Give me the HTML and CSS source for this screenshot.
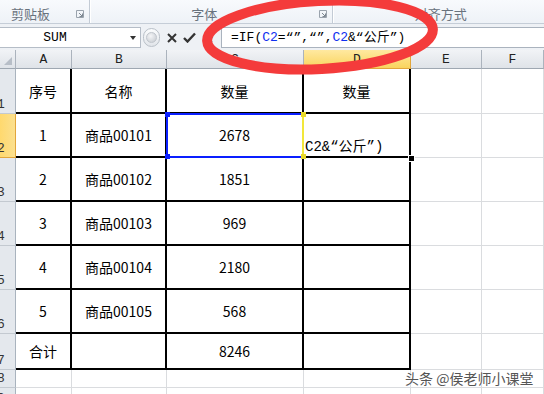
FILE: index.html
```html
<!DOCTYPE html>
<html lang="zh-CN">
<head>
  <meta charset="UTF-8">
  <title>公式示例</title>
  <link rel="stylesheet" href="styles.css">
</head>
<body>
  <div class="ribbon">
    <div class="grp g1"><span>剪贴板</span><svg class="launch" width="8" height="8" viewBox="0 0 8 8"><path d="M0.5 7.5V0.5H7.5V7.5Z" fill="none" stroke="#9aa3ad"/><path d="M3 3L6.5 6.5M6.5 3.5V6.5H3.5" fill="none" stroke="#7d8791"/></svg></div>
    <div class="grp g2"><span>字体</span><svg class="launch" width="8" height="8" viewBox="0 0 8 8"><path d="M0.5 7.5V0.5H7.5V7.5Z" fill="none" stroke="#9aa3ad"/><path d="M3 3L6.5 6.5M6.5 3.5V6.5H3.5" fill="none" stroke="#7d8791"/></svg></div>
    <div class="grp g3"><span>对齐方式</span></div>
  </div>

  <div class="fbar">
    <div class="namebox"><span class="name">SUM</span><span class="drop"></span></div>
    <div class="tools">
      <span class="knob"><i></i></span>
      <svg class="ico" width="10" height="10" viewBox="0 0 10 10"><path d="M1 1L9 9M9 1L1 9" stroke="#333" stroke-width="2"/></svg>
      <svg class="ico" width="13" height="11" viewBox="0 0 13 11"><path d="M1 6L4.5 9.5L12 1.5" fill="none" stroke="#333" stroke-width="2.4"/></svg>
      <span class="fx">fx</span>
    </div>
    <div class="formula">=IF(<span class="ref">C2</span>=“”,“”,<span class="ref">C2</span>&amp;“公斤”)</div>
  </div>

  <div class="sheet">
    <div class="ch corner"><i></i></div>
    <div class="ch">A</div>
    <div class="ch">B</div>
    <div class="ch">C</div>
    <div class="ch on">D</div>
    <div class="ch">E</div>
    <div class="ch">F</div>

    <div class="rh"><span>1</span></div>
    <div class="c t">序号</div>
    <div class="c t">名称</div>
    <div class="c t">数量</div>
    <div class="c t">数量</div>
    <div class="c"></div>
    <div class="c"></div>

    <div class="rh on"><span>2</span></div>
    <div class="c t">1</div>
    <div class="c t">商品00101</div>
    <div class="c t">2678</div>
    <div class="c t edit">C2&amp;“公斤”)</div>
    <div class="c"></div>
    <div class="c"></div>

    <div class="rh"><span>3</span></div>
    <div class="c t">2</div>
    <div class="c t">商品00102</div>
    <div class="c t">1851</div>
    <div class="c t"></div>
    <div class="c"></div>
    <div class="c"></div>

    <div class="rh"><span>4</span></div>
    <div class="c t">3</div>
    <div class="c t">商品00103</div>
    <div class="c t">969</div>
    <div class="c t"></div>
    <div class="c"></div>
    <div class="c"></div>

    <div class="rh"><span>5</span></div>
    <div class="c t">4</div>
    <div class="c t">商品00104</div>
    <div class="c t">2180</div>
    <div class="c t"></div>
    <div class="c"></div>
    <div class="c"></div>

    <div class="rh"><span>6</span></div>
    <div class="c t">5</div>
    <div class="c t">商品00105</div>
    <div class="c t">568</div>
    <div class="c t"></div>
    <div class="c"></div>
    <div class="c"></div>

    <div class="rh"><span>7</span></div>
    <div class="c t">合计</div>
    <div class="c t"></div>
    <div class="c t">8246</div>
    <div class="c t"></div>
    <div class="c"></div>
    <div class="c"></div>

    <div class="rh"><span>8</span></div>
    <div class="c"></div>
    <div class="c"></div>
    <div class="c"></div>
    <div class="c"></div>
    <div class="c"></div>
    <div class="c"></div>

    <div class="rh"><span>9</span></div>
    <div class="c"></div>
    <div class="c"></div>
    <div class="c"></div>
    <div class="c"></div>
    <div class="c"></div>
    <div class="c"></div>
  </div>

  <!-- reference range C2 while editing D2 -->
  <div class="sel">
    <i class="sq tl"></i><i class="sq bl"></i><i class="sq tr"></i><i class="sq br"></i>
  </div>
  <div class="handle"></div>

  <svg class="ring" width="544" height="100" viewBox="0 0 544 100">
    <ellipse cx="320" cy="35" rx="113" ry="34" transform="rotate(-3 320 35)" fill="none" stroke="#f43b3b" stroke-width="10"/>
  </svg>

  <div class="mark">头条 @侯老师小课堂</div>
</body>
</html>
```

FILE: styles.css
```css
/* Excel 2010 style sheet view */
body {
  margin: 0;
  width: 544px;
  height: 394px;
  overflow: hidden;
  position: relative;
  background: #fff;
  font-family: "Noto Sans CJK SC", sans-serif;
  color: #000;
}

/* ribbon group labels */
.ribbon {
  display: flex;
  height: 23px;
  background: linear-gradient(#f8fafd, #eef2f7);
  border-bottom: 1px solid #c5cdd7;
}

.grp {
  position: relative;
  display: flex;
  align-items: center;
  justify-content: center;
  padding-top: 4px;
  box-sizing: border-box;
  font-size: 13px;
  color: #69727d;
  border-right: 1px solid #c3cbd5;
  box-shadow: 1px 0 0 #fff;
}

.g1 {
  width: 94px;
  justify-content: flex-start;
  padding-left: 11px;
}

.g2 {
  width: 253px;
  padding-right: 14px;
}

.g3 {
  width: 220px;
  border-right: none;
  padding-left: 4px;
}

.launch {
  position: absolute;
  right: 5px;
  top: 10px;
}

/* formula bar */
.fbar {
  display: flex;
  align-items: flex-start;
  height: 26px;
  padding-top: 3px;
  box-sizing: border-box;
  background: #eef1f5;
}

.namebox {
  display: flex;
  align-items: center;
  width: 141px;
  height: 21px;
  box-sizing: border-box;
  background: #fff;
  border: 1px solid #b5bdc7;
  border-left: none;
}

.name {
  width: 110px;
  text-align: center;
  font: 13px "Liberation Mono", monospace;
}

.drop {
  margin-left: 20px;
  width: 0;
  height: 0;
  border-left: 3px solid transparent;
  border-right: 3px solid transparent;
  border-top: 4px solid #333;
}

.tools {
  display: flex;
  align-items: center;
  gap: 0;
  width: 80px;
  height: 21px;
}

.knob {
  display: flex;
  align-items: center;
  justify-content: center;
  width: 17px;
  height: 19px;
  margin-left: 2px;
  box-sizing: border-box;
  border: 1px solid #b9c0c8;
  border-radius: 10px;
  background: linear-gradient(#fbfcfd, #e1e5ea);
}

.knob i {
  width: 9px;
  height: 9px;
  border-radius: 50%;
  background: radial-gradient(circle at 40% 35%, #f4f5f7, #c4c9cf);
  border: 1px solid #c0c5cc;
}

.ico {
  margin-left: 7px;
}

.tools .ico + .ico {
  margin-left: 6px;
}

.fx {
  margin-left: 9px;
  font: italic 11px "Liberation Serif", serif;
  color: #555;
}

.formula {
  flex: 1;
  height: 21px;
  box-sizing: border-box;
  padding-left: 9px;
  background: #fff;
  border: 1px solid #aab3be;
  border-right: none;
  font: 13px/19px "Liberation Mono", "Noto Sans CJK SC", monospace;
  white-space: nowrap;
}

.ref {
  color: #1030f0;
}

/* grid */
.sheet {
  display: grid;
  grid-template-columns: 16px 56px 95px 137px 107px 71px 62px;
  grid-template-rows: 19px 45px 44px 44px 44px 44px 44px 36px 18px 20px;
}

.ch {
  display: flex;
  align-items: center;
  justify-content: center;
  box-sizing: border-box;
  background: linear-gradient(#f1f3f6, #dfe3e8);
  border-right: 1px solid #abb3bd;
  border-bottom: 1px solid #9ea7b1;
  font: 13px "Liberation Mono", monospace;
  color: #222;
}

.ch.on {
  background: linear-gradient(#ffe9a0, #f9d45e);
  border-right-color: #e2a63b;
  border-bottom-color: #e2a63b;
}

.corner {
  position: relative;
}

.corner i {
  position: absolute;
  right: 3px;
  bottom: 3px;
  width: 0;
  height: 0;
  border-left: 8px solid transparent;
  border-bottom: 8px solid #b7bec7;
}

.rh {
  display: flex;
  align-items: flex-end;
  overflow: hidden;
  box-sizing: border-box;
  background: #e4e8ed;
  border-right: 1px solid #a9b3be;
  border-bottom: 1px solid #c3c9d0;
  font: 13px "Liberation Mono", monospace;
  color: #333;
}

.rh span {
  margin-left: -3px;
  margin-bottom: 1px;
}

.rh.on {
  background: linear-gradient(90deg, #ffd96e, #fbe08f);
  border-right-color: #e2a63b;
  border-bottom-color: #e2a63b;
}

.c {
  display: flex;
  align-items: center;
  justify-content: center;
  box-sizing: border-box;
  border-right: 1px solid #dadcdf;
  border-bottom: 1px solid #dadcdf;
  font-size: 14px;
  white-space: nowrap;
}

.c.t {
  border-right: 2px solid #000;
  border-bottom: 2px solid #000;
}

.c.edit {
  align-items: flex-end;
  justify-content: flex-start;
  padding-left: 1px;
  padding-bottom: 1px;
  font: 14px "Liberation Mono", "Noto Sans CJK SC", monospace;
}

/* overlays */
.sel {
  position: absolute;
  left: 166px;
  top: 113px;
  width: 138px;
  height: 45px;
  box-sizing: border-box;
  border: 2px solid #0a1fff;
  border-right-color: #f2e73a;
}

.sq {
  position: absolute;
  width: 5px;
  height: 5px;
  background: #0a1fff;
}

.sq.tl { left: -3px; top: -3px; }
.sq.bl { left: -3px; bottom: -3px; }
.sq.tr { right: -4px; top: -3px; background: #e8d82a; }
.sq.br { right: -4px; bottom: -3px; background: #e8d82a; }

.handle {
  position: absolute;
  left: 408px;
  top: 155px;
  width: 5px;
  height: 5px;
  background: #000;
  border: 1px solid #fff;
}

.ring {
  position: absolute;
  left: 0;
  top: 0;
}

.mark {
  position: absolute;
  left: 405px;
  top: 368px;
  font-size: 14px;
  color: #555;
  text-shadow: 0 0 2px #fff, 0 0 2px #fff;
  white-space: nowrap;
}
```
